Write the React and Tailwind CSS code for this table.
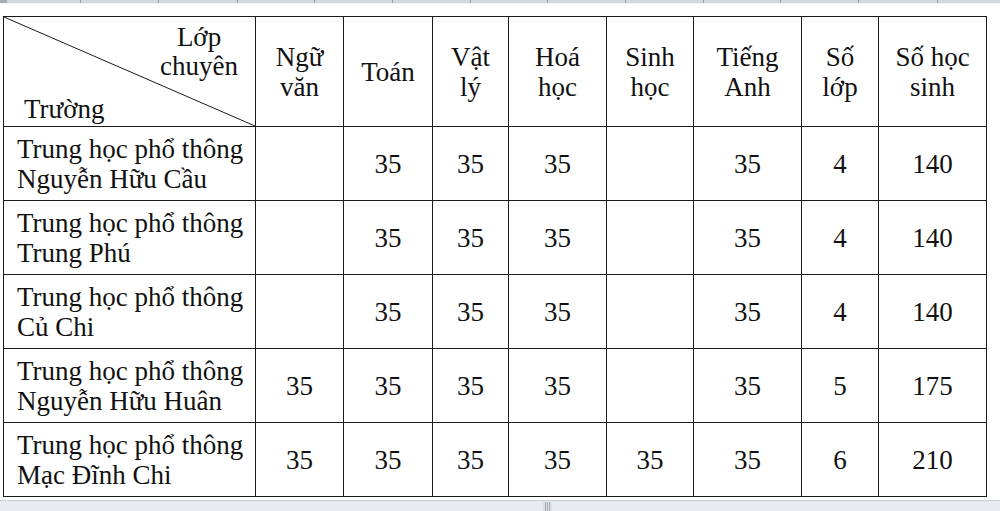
const rows = [
  { school: ['Trung học phổ thông', 'Nguyễn Hữu Cầu'], vals: ['', '35', '35', '35', '', '35', '4', '140'] },
  { school: ['Trung học phổ thông', 'Trung Phú'], vals: ['', '35', '35', '35', '', '35', '4', '140'] },
  { school: ['Trung học phổ thông', 'Củ Chi'], vals: ['', '35', '35', '35', '', '35', '4', '140'] },
  { school: ['Trung học phổ thông', 'Nguyễn Hữu Huân'], vals: ['35', '35', '35', '35', '', '35', '5', '175'] },
  { school: ['Trung học phổ thông', 'Mạc Đĩnh Chi'], vals: ['35', '35', '35', '35', '35', '35', '6', '210'] },
];

const headers = [
  ['Ngữ', 'văn'],
  ['Toán'],
  ['Vật', 'lý'],
  ['Hoá', 'học'],
  ['Sinh', 'học'],
  ['Tiếng', 'Anh'],
  ['Số', 'lớp'],
  ['Số học', 'sinh'],
];

const ticks = [80, 158, 237, 314, 392, 470, 547, 625, 703, 780, 858, 937];

export default function App() {
  return (
    <div className="w-[1000px] h-[511px] bg-white overflow-hidden flex flex-col [font-family:'Liberation_Serif','Times_New_Roman',serif] text-[#111]">
      {/* ruler strip */}
      <div className="relative h-[3px] bg-[#d3d6db] shrink-0">
        <div className="absolute left-0 top-0 w-[7px] h-[3px] bg-[#a9adb3]" />
        {ticks.map((t) => (
          <div key={t} className="absolute top-0 w-px h-[3px] bg-[#9da1a7]" style={{ left: t }} />
        ))}
      </div>
      <div className="h-px bg-[#f3f4f6] shrink-0" />

      <div className="flex-1 pt-[12px] pl-[3px]">
        <table className="table-fixed border-collapse w-[984px] text-[27px] leading-[30px] [font-family:'Liberation_Serif','Times_New_Roman',serif]">
          <colgroup>
            <col className="w-[252px]" />
            <col className="w-[88px]" />
            <col className="w-[89px]" />
            <col className="w-[76px]" />
            <col className="w-[98px]" />
            <col className="w-[87px]" />
            <col className="w-[108px]" />
            <col className="w-[77px]" />
            <col className="w-[108px]" />
          </colgroup>
          <thead>
            <tr className="h-[110px]">
              <th className="relative border border-[#1a1a1a] p-0 font-normal align-top">
                <svg className="absolute inset-0 w-full h-full" preserveAspectRatio="none" viewBox="0 0 100 100">
                  <line x1="0" y1="0" x2="100" y2="100" stroke="#1a1a1a" strokeWidth="1" vectorEffect="non-scaling-stroke" />
                </svg>
                <div className="relative flex flex-col h-[109px]">
                  <div className="self-end pr-[17px] pt-[6px] text-center leading-[29px]">
                    Lớp<br />chuyên
                  </div>
                  <div className="mt-auto pl-[20px] pb-[2px] text-left">Trường</div>
                </div>
              </th>
              {headers.map((h, i) => (
                <th key={i} className="border border-[#1a1a1a] p-0 font-normal text-center align-middle">
                  {h.map((l, j) => (
                    <div key={j}>{l}</div>
                  ))}
                </th>
              ))}
            </tr>
          </thead>
          <tbody>
            {rows.map((r, i) => (
              <tr key={i} className="h-[74px]">
                <td className="border border-[#1a1a1a] pl-[13px] pr-0 py-0 align-middle">
                  <div>{r.school[0]}</div>
                  <div>{r.school[1]}</div>
                </td>
                {r.vals.map((v, j) => (
                  <td key={j} className="border border-[#1a1a1a] p-0 text-center align-middle">
                    {v}
                  </td>
                ))}
              </tr>
            ))}
          </tbody>
        </table>
      </div>

      {/* bottom scrollbar strip */}
      <div className="h-px bg-[#c9ccd1] shrink-0" />
      <div className="relative h-[10px] bg-[#e9ebef] shrink-0">
        <div className="absolute left-[543px] top-[1px] w-[9px] h-[9px] flex gap-px justify-center bg-[#dcdfe3]">
          <div className="w-px h-full bg-[#a8acb2]" />
          <div className="w-px h-full bg-[#a8acb2]" />
          <div className="w-px h-full bg-[#a8acb2]" />
        </div>
      </div>
    </div>
  );
}
